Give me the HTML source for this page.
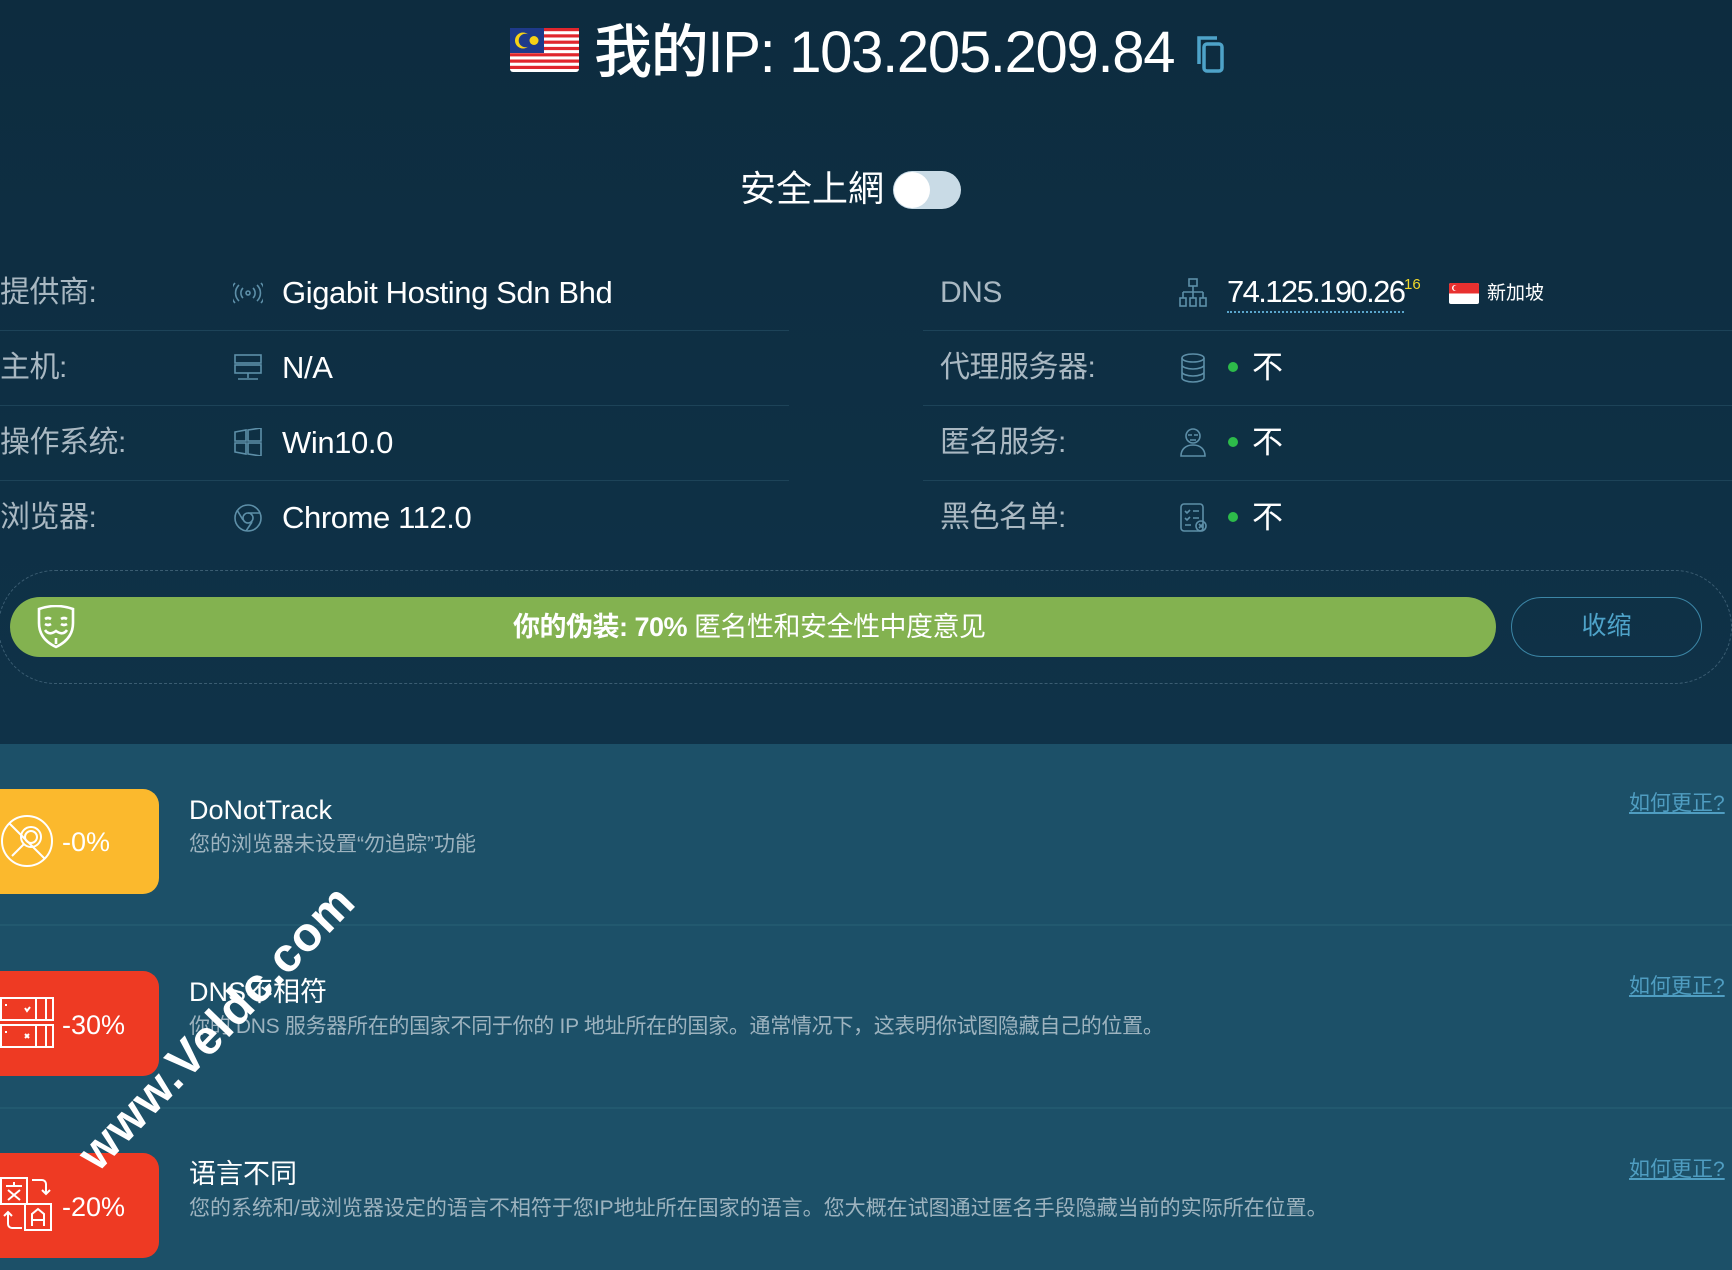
<!DOCTYPE html>
<html><head><meta charset="utf-8"><style>
*{margin:0;padding:0;box-sizing:border-box}
body{width:1732px;height:1270px;overflow:hidden;background:#1c5068;font-family:"Liberation Sans","Noto Sans CJK SC",sans-serif;position:relative;color:#fff}
.top{position:absolute;left:0;top:0;width:1732px;height:744px;background:linear-gradient(180deg,#0d2c3f 0%,#0f3248 100%)}
.abs{position:absolute;white-space:nowrap}
.lab{font-size:30px;color:#a9b8c2;line-height:40px;letter-spacing:-0.5px}
.val{font-size:31px;color:#fff;line-height:40px;letter-spacing:-0.4px}
.sep{position:absolute;height:1px;background:#1d4358}
.dot{position:absolute;width:10px;height:10px;border-radius:50%;background:#2dbb4a}
.tile{position:absolute;left:0;width:159px;height:105px;border-radius:0 16px 16px 0}
.ct{font-size:27px;color:#fff}
.cd{font-size:21px;color:#9db3bf}
.fix{font-size:21px;color:#4f9dc1;text-decoration:underline}
.csep{position:absolute;left:0;width:1732px;height:2px;background:#22596f}
</style></head><body>
<div class="top"></div>

<svg class="abs" style="left:510px;top:28px" width="69" height="44" viewBox="0 0 69 44">
<rect width="69" height="44" rx="3" fill="#fff"/>
<g fill="#e0262d"><rect y="0" width="69" height="3.2"/><rect y="6.3" width="69" height="3.2"/><rect y="12.6" width="69" height="3.2"/><rect y="18.9" width="69" height="3.2"/><rect y="25.2" width="69" height="3.2"/><rect y="31.5" width="69" height="3.2"/><rect y="37.8" width="69" height="3.2"/></g>
<rect width="34" height="25" fill="#1e3a8a"/>
<circle cx="13" cy="12.5" r="8" fill="#f7d116"/><circle cx="15.5" cy="12.5" r="6.8" fill="#1e3a8a"/>
<circle cx="24" cy="12.5" r="4.5" fill="#f7d116"/>
</svg>
<div class="abs" style="left:594px;top:18px;font-size:58px;line-height:70px;font-weight:500;letter-spacing:-1.3px">我的IP: 103.205.209.84</div>
<svg class="abs" style="left:1195px;top:34px" width="32" height="40" viewBox="0 0 32 40" fill="none" stroke="#4ea3c9" stroke-width="3.5"><path d="M4 30V4h18"/><rect x="9" y="10" width="18" height="27" rx="3"/></svg>

<div class="abs" style="left:740px;top:166px;font-size:36px;line-height:46px;color:#fff">安全上網</div>
<div class="abs" style="left:893px;top:171px;width:68px;height:38px;border-radius:19px;background:#c9dbe6"></div>
<div class="abs" style="left:894px;top:172px;width:36px;height:36px;border-radius:50%;background:#fff"></div>

<div class="abs lab" style="left:0;top:273px">提供商:</div>
<div class="abs lab" style="left:0;top:348px">主机:</div>
<div class="abs lab" style="left:0;top:423px">操作系统:</div>
<div class="abs lab" style="left:0;top:498px">浏览器:</div>
<svg class="abs" style="left:233px;top:281px" width="30" height="24" viewBox="0 0 30 24" fill="none" stroke="#5d8fa8" stroke-width="1.6"><circle cx="15" cy="12" r="2"/><path d="M10 7a7 7 0 0 0 0 10M20 7a7 7 0 0 1 0 10M6 4a11 11 0 0 0 0 16M24 4a11 11 0 0 1 0 16M2 2a15 15 0 0 0 0 20M28 2a15 15 0 0 1 0 20"/></svg>
<svg class="abs" style="left:234px;top:353px" width="28" height="30" viewBox="0 0 28 30" fill="none" stroke="#5d8fa8" stroke-width="1.6"><rect x="1" y="2" width="26" height="8"/><rect x="1" y="12" width="26" height="8"/><path d="M14 20v5M4 26h20"/></svg>
<svg class="abs" style="left:234px;top:428px" width="28" height="28" viewBox="0 0 28 28" fill="none" stroke="#5d8fa8" stroke-width="1.6"><path d="M1 4l11-2v11H1zM14 2l13-2v13H14zM1 15h11v11L1 24zM14 15h13v13l-13-2z"/></svg>
<svg class="abs" style="left:233px;top:503px" width="30" height="30" viewBox="0 0 30 30" fill="none" stroke="#5d8fa8" stroke-width="1.6"><circle cx="15" cy="15" r="13"/><circle cx="15" cy="15" r="5"/><path d="M15 10h12M10 17L4 7M19 19l-6 9"/></svg>
<div class="abs val" style="left:282px;top:273px">Gigabit Hosting Sdn Bhd</div>
<div class="abs val" style="left:282px;top:348px">N/A</div>
<div class="abs val" style="left:282px;top:423px">Win10.0</div>
<div class="abs val" style="left:282px;top:498px">Chrome 112.0</div>
<div class="sep" style="left:0;top:330px;width:789px"></div>
<div class="sep" style="left:0;top:405px;width:789px"></div>
<div class="sep" style="left:0;top:480px;width:789px"></div>

<div class="abs lab" style="left:940px;top:273px">DNS</div>
<div class="abs lab" style="left:940px;top:348px">代理服务器:</div>
<div class="abs lab" style="left:940px;top:423px">匿名服务:</div>
<div class="abs lab" style="left:940px;top:498px">黑色名单:</div>
<svg class="abs" style="left:1179px;top:278px" width="28" height="30" viewBox="0 0 28 30" fill="none" stroke="#5d8fa8" stroke-width="1.6"><rect x="10" y="1" width="8" height="7"/><path d="M14 8v6M4 14h20M4 14v6M14 14v6M24 14v6"/><rect x="1" y="20" width="6" height="8"/><rect x="11" y="20" width="6" height="8"/><rect x="21" y="20" width="6" height="8"/></svg>
<svg class="abs" style="left:1180px;top:353px" width="26" height="30" viewBox="0 0 26 30" fill="none" stroke="#5d8fa8" stroke-width="1.6"><ellipse cx="13" cy="5" rx="11" ry="4"/><path d="M2 5v20c0 2 5 4 11 4s11-2 11-4V5M2 12c0 2 5 4 11 4s11-2 11-4M2 19c0 2 5 4 11 4s11-2 11-4"/></svg>
<svg class="abs" style="left:1180px;top:427px" width="26" height="30" viewBox="0 0 26 30" fill="none" stroke="#5d8fa8" stroke-width="1.6"><circle cx="13" cy="9" r="7"/><path d="M8 8h4M14 8h4M10 13h6M1 29c0-7 5-11 12-11s12 4 12 11z"/></svg>
<svg class="abs" style="left:1180px;top:503px" width="28" height="30" viewBox="0 0 28 30" fill="none" stroke="#5d8fa8" stroke-width="1.6"><rect x="1" y="1" width="22" height="27" rx="3"/><path d="M5 8l2 2 3-3M13 8h6M5 15l2 2 3-3M13 15h6M5 22h6"/><circle cx="21" cy="23" r="5"/><path d="M19 21l4 4M23 21l-4 4"/></svg>
<div class="abs val" style="left:1227px;top:273px;border-bottom:2px dotted #5aa6cc;line-height:38px;letter-spacing:-1.6px">74.125.190.26</div>
<div class="abs" style="left:1404px;top:276px;font-size:15px;color:#f0d82a">16</div>
<svg class="abs" style="left:1449px;top:283px" width="30" height="21" viewBox="0 0 30 21"><rect width="30" height="21" rx="2" fill="#fff"/><path d="M0 2a2 2 0 0 1 2-2h26a2 2 0 0 1 2 2v8.5H0z" fill="#e8302f"/><circle cx="6" cy="5" r="3" fill="#fff"/><circle cx="7.2" cy="5" r="2.8" fill="#e8302f"/></svg>
<div class="abs" style="left:1487px;top:281px;font-size:19px;line-height:26px;color:#fff">新加坡</div>
<div class="dot" style="left:1228px;top:362px"></div>
<div class="dot" style="left:1228px;top:437px"></div>
<div class="dot" style="left:1228px;top:512px"></div>
<div class="abs val" style="left:1252px;top:348px">不</div>
<div class="abs val" style="left:1252px;top:423px">不</div>
<div class="abs val" style="left:1252px;top:498px">不</div>
<div class="sep" style="left:923px;top:330px;width:809px"></div>
<div class="sep" style="left:923px;top:405px;width:809px"></div>
<div class="sep" style="left:923px;top:480px;width:809px"></div>

<div class="abs" style="left:-2px;top:570px;width:1734px;height:114px;border:1px dashed #3b5d72;border-radius:57px"></div>
<div class="abs" style="left:10px;top:597px;width:1486px;height:60px;border-radius:30px;background:#83b250"></div>
<svg class="abs" style="left:36px;top:605px" width="40" height="44" viewBox="0 0 40 44" fill="none" stroke="#fff" stroke-width="2.6"><path d="M3 4q17-6 34 0v14q0 16-17 24Q3 34 3 18z"/><path d="M9 14q3-2 6 0M25 14q3-2 6 0M9 19q3 2 6 0M25 19q3 2 6 0M9 25q4 6 11 1q7 5 11-1M20 33v6"/></svg>
<div class="abs" style="left:513px;top:610px;font-size:27px;line-height:34px;color:#fff;letter-spacing:-0.5px"><b>你的伪装: 70%</b> 匿名性和安全性中度意见</div>
<div class="abs" style="left:1511px;top:597px;width:191px;height:60px;border:1.5px solid #3c86a6;border-radius:30px;color:#4ea3c9;font-size:25px;line-height:57px;text-align:center">收缩</div>

<div class="tile" style="top:789px;background:#fbb92d"></div>
<svg class="abs" style="left:0;top:813px" width="54" height="56" viewBox="0 0 54 56" fill="none" stroke="#fff" stroke-width="2"><circle cx="27" cy="28" r="25"/><circle cx="31" cy="24" r="10"/><circle cx="31" cy="24" r="6"/><path d="M24 31L12 43M9 10l36 36"/></svg>
<div class="abs" style="left:62px;top:822px;font-size:27px;color:#fff;line-height:40px">-0%</div>
<div class="abs ct" style="left:189px;top:793px;line-height:34px">DoNotTrack</div>
<div class="abs cd" style="left:189px;top:830px;line-height:30px">您的浏览器未设置“勿追踪”功能</div>
<div class="abs fix" style="left:1629px;top:789px;line-height:30px">如何更正?</div>
<div class="csep" style="top:924px"></div>

<div class="tile" style="top:971px;background:#ee3a23"></div>
<svg class="abs" style="left:0;top:996px" width="54" height="54" viewBox="0 0 54 54" fill="none" stroke="#fff" stroke-width="2"><rect x="1" y="2" width="52" height="22"/><rect x="1" y="29" width="52" height="22"/><path d="M36 2v22M46 2v22M36 29v22M46 29v22M6 8v2M6 35v2M25 12l2 3 3-4M25 38l4 4M29 38l-4 4"/></svg>
<div class="abs" style="left:62px;top:1005px;font-size:27px;color:#fff;line-height:40px">-30%</div>
<div class="abs ct" style="left:189px;top:975px;line-height:34px">DNS不相符</div>
<div class="abs cd" style="left:189px;top:1012px;line-height:30px;letter-spacing:-0.3px">你的 DNS 服务器所在的国家不同于你的 IP 地址所在的国家。通常情况下，这表明你试图隐藏自己的位置。</div>
<div class="abs fix" style="left:1629px;top:972px;line-height:30px">如何更正?</div>
<div class="csep" style="top:1107px"></div>

<div class="tile" style="top:1153px;background:#ee3a23"></div>
<svg class="abs" style="left:0;top:1176px" width="54" height="56" viewBox="0 0 54 56" fill="none" stroke="#fff" stroke-width="2"><rect x="1" y="2" width="26" height="26"/><rect x="25" y="28" width="26" height="26"/><path d="M6 10h16M14 6v4M8 14l12 10M20 14L8 24M32 50V38l6-5 6 5v12M32 44h12M32 4h10a4 4 0 0 1 4 4v10M42 14l4 4 4-4M22 52H12a4 4 0 0 1-4-4V36M4 40l4-4 4 4"/></svg>
<div class="abs" style="left:62px;top:1187px;font-size:27px;color:#fff;line-height:40px">-20%</div>
<div class="abs ct" style="left:189px;top:1157px;line-height:34px">语言不同</div>
<div class="abs cd" style="left:189px;top:1194px;line-height:30px">您的系统和/或浏览器设定的语言不相符于您IP地址所在国家的语言。您大概在试图通过匿名手段隐藏当前的实际所在位置。</div>
<div class="abs fix" style="left:1629px;top:1155px;line-height:30px">如何更正?</div>

<div class="abs" style="left:30px;top:1000px;font-size:48px;font-weight:bold;color:#fff;transform:rotate(-46deg);transform-origin:center;letter-spacing:1px;line-height:56px">www.Veldc.com</div>
</body></html>
